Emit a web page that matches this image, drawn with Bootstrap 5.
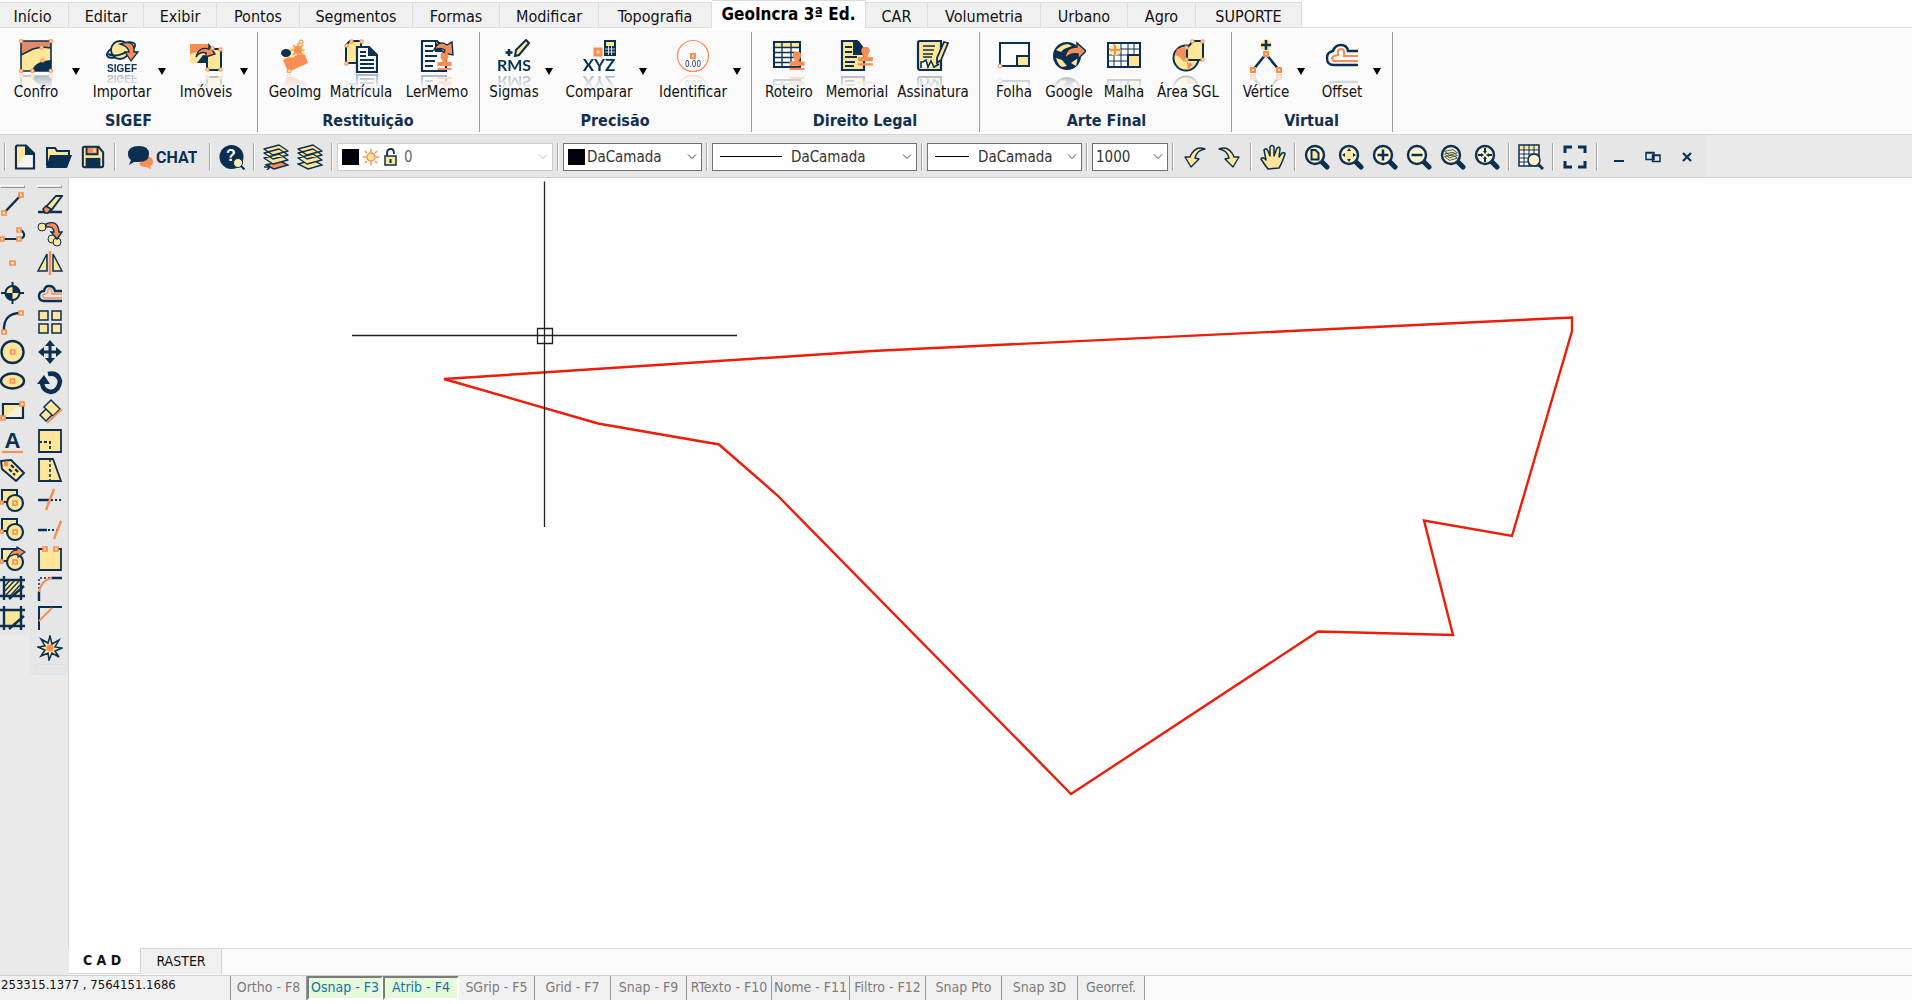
<!DOCTYPE html>
<html lang="pt-BR">
<head>
<meta charset="utf-8">
<meta name="viewport" content="width=device-width, initial-scale=1">
<title>GeoIncra 3ª Ed. - CAD</title>
<link href="https://cdn.jsdelivr.net/npm/bootstrap@5.3.0/dist/css/bootstrap.min.css" rel="stylesheet">
<style>
:root{--navy:#0a2f50;--yel:#ffe699;--ora:#fa8c55;--bar:#e6e6e6}
body{font-family:"DejaVu Sans Condensed","DejaVu Sans",sans-serif;font-size:14px;line-height:18px;color:#111;background:#fefefe;overflow:hidden}
button{font:inherit;color:inherit;background:none;border:0;padding:0}
svg{display:block;flex:none}
.n{fill:none;stroke:var(--navy)}.o{fill:none;stroke:var(--ora)}
.fn{fill:var(--navy)}.fy{fill:var(--yel)}.fo{fill:var(--ora)}
.ny{fill:var(--yel);stroke:var(--navy)}.oy{fill:var(--yel);stroke:var(--ora)}.no{fill:var(--ora);stroke:var(--navy)}
/* menu tabs */
.menu-strip{display:grid;grid-template-columns:69px 75px 73px 83px 113px 87px 99px 113px 154px 62px 113px 87px 68px 106px;height:28px;border-bottom:1px solid #e0e0e0;font-size:16px}
.menu-strip a{color:#111;text-decoration:none;text-align:center;margin-top:2px;padding-top:4px;line-height:20px;background:#f0f0f0;border-top:1px solid #dcdcdc;border-right:1px solid #dcdcdc;white-space:nowrap}
.menu-strip a:first-child{padding-right:3px}
.menu-strip a.on{font-size:17px;font-weight:bold;background:#fefefe;margin:0 0 -1px;padding-top:3px;color:#000}
/* ribbon */
.ribbon{background:#fafafa;margin-top:3px;height:101px}
.rgroup{border-right:1px solid #9c9c9c;height:100px;padding:7px 0 0 5px;margin-top:1px}
.rgroup h2{font-size:16px;line-height:20px;font-weight:bold;color:#12304f;text-align:center;margin:10px 0 0 -6px}
.rgroup .tools{gap:6px;height:62px}
.rgroup .tight{gap:0}
.g1{width:258px;padding-left:2px}.g2{width:222px}.g3{width:272px}.g4{width:228px}.g5{width:252px}.g6{width:161px}
.g1 h2{margin-left:-2px}
.rb{width:64px;height:62px;font-size:15px}
.rb svg{margin:0 auto;-webkit-box-reflect:below 1px linear-gradient(transparent 55%,rgba(0,0,0,.35))}
.rb span{display:flex;justify-content:center;margin-top:11px;line-height:17px;position:relative;white-space:nowrap}
.w52{width:52px}.w58{width:58px}.w68{width:68px}.w72{width:72px}.w76{width:76px}.w80{width:80px}.w84{width:84px}
.caret{width:12px;height:62px;font-size:0}
.caret:after{content:"";display:block;margin:3px auto 0;width:7px;border:4px solid transparent;border-top:7px solid #000;border-bottom:0}
/* quick bar */
.quick{background:linear-gradient(90deg,var(--bar) 1707px,#eaeaea 1707px);height:44px;padding-top:2px;margin-top:2px;border-top:1px solid #d4d4d4;border-bottom:1px solid #d0d0d0}
.qb{width:34px;height:34px;display:flex;align-items:center;justify-content:center}
.chat{width:85px}
.qs{width:10px;height:28px;flex:none;background:linear-gradient(90deg,transparent 4px,#a5a5a5 4px 5px,#fff 5px 6px,transparent 6px)}
.grip{width:8px}
.pick{appearance:none;height:28px;border:1px solid #707070;border-radius:0;font-size:15px;color:#333;padding:0 22px 0 6px;background:#fff url("data:image/svg+xml,%3Csvg xmlns='http://www.w3.org/2000/svg' width='10' height='6'%3E%3Cpath d='M1 .5l4 4 4-4' fill='none' stroke='%23444'/%3E%3C/svg%3E") no-repeat right 4px center}
.p-layer{width:216px;border-color:#ccc;padding-left:66px;color:#666;background-image:url("data:image/svg+xml,%3Csvg xmlns='http://www.w3.org/2000/svg' width='10' height='6'%3E%3Cpath d='M1 .5l4 4 4-4' fill='none' stroke='%23bbb'/%3E%3C/svg%3E")}
.p-color{width:139px;padding-left:23px}.p-line{width:205px;padding-left:78px}.p-wt{width:155px;padding-left:50px}.p-scale{width:76px;padding-left:3px}
.deco{position:absolute;left:5px;top:5px;pointer-events:none}
/* side bars */
.side{width:69px;background:#eaeaea;border-right:1px solid #d4d4d4}
.toolcol{background:var(--bar);padding-top:7px;align-self:flex-start}
.c1{width:30px}.c2{width:39px;padding-left:7px}
.toolcol hr{margin:0 0 3px;width:25px;height:3px;border:1px solid;border-color:#fff #999 #999 #fff;opacity:1}
.stack{display:flex;flex-direction:column;justify-content:space-between;width:25px}
.stack button{height:26px}
.h15{height:440px}.h16{height:470px}
.slot{width:31px;height:11px;margin:3px 0 0 -2px;border:1px solid #d3e3ef}
.canvas{background:#fefefe;min-width:0}
/* sheet tabs and status */
.sheets{background:#fafafa;height:27px;border-top:1px solid #d8d8d8;margin-left:69px}
.sheetwrap{background:#eaeaea;height:27px}
.sheets button{height:25px;border-right:1px solid #d4d4d4;background:#f0f0f0;line-height:23px;width:81px}
.sheets .cad{width:72px;margin-top:-3px;height:28px;background:#fff;font-weight:bold;border-bottom:1px solid #d4d4d4;padding:2px 5px 0 0;white-space:nowrap}
.status{display:grid;grid-template-columns:231px repeat(6,76px) 85px 78px repeat(3,76px) 67px 1fr;height:25px;border-top:1px solid #d0d0d0;border-bottom:2px solid #9a9a9a;font-size:14px;line-height:18px;margin-bottom:4px}
.status>*{border-right:1px solid #999;background:#f0f0f0;white-space:nowrap}
.status .coords{font-size:13px;padding-left:1px}
.status button{color:#7c7c7c;padding-bottom:3px;display:flex;justify-content:center;align-items:center}
.status button.act{color:#1672b0;background:#e6f9d8;border:2px solid #fff;border-top-color:#7c7c7c;border-left-color:#7c7c7c;padding:0 0 2px}
.status .rest{background:#fafafa;border:0}
</style>
<script src="https://cdn.jsdelivr.net/npm/bootstrap@5.3.0/dist/js/bootstrap.bundle.min.js"></script>
</head>
<body class="d-flex flex-column vh-100">
<svg width="0" height="0" class="position-absolute" aria-hidden="true">
<symbol id="lens" viewBox="0 0 26 26"><path class="n" stroke-width="5" stroke-linecap="round" d="M18 18l5 5"/><circle cx="11" cy="11" r="9" class="n" style="fill:#fff4d2" stroke-width="2.4"/></symbol>
<symbol id="layers" viewBox="0 0 26 26"><path class="ny" stroke-width="1.4" stroke-linejoin="round" d="M1 16l16-3 8 6-15 4zM1 11l16-3 8 6-15 4zM1 6l16-3 8 6-15 4z"/></symbol>
<symbol id="sheet4" viewBox="0 0 26 26"><path class="ny" stroke-width="1.400" stroke-linejoin="round" d="M1 14l15-4 9 6-15 4zM1 9l15-4 9 6-15 4zM1 5l15-4 9 6-15 4z"/></symbol>
<symbol id="stamp" viewBox="0 0 18 18"><path class="fo" d="M5 3a4 4 0 0 1 8 0c0 3-2 3-2 6h5v4H2V9h5c0-3-2-3-2-6zM2 15h14v2H2z"/></symbol>
<symbol id="shapes" viewBox="0 0 26 26"><path class="ny" stroke-width="2" d="M2 3h15v12H2z"/><circle class="ny" cx="15" cy="16" r="8" stroke-width="2.2"/><path class="oy" stroke-width="1.6" d="M13 14h4v4h-4zM0 14h3v3H0z"/></symbol>
</svg>

<nav class="menu-strip flex-shrink-0" aria-label="Menu">
<a href="#">Início</a><a href="#">Editar</a><a href="#">Exibir</a><a href="#">Pontos</a><a href="#">Segmentos</a><a href="#">Formas</a><a href="#">Modificar</a><a href="#">Topografia</a><a href="#" class="on" aria-current="page">GeoIncra 3ª Ed.</a><a href="#">CAR</a><a href="#">Volumetria</a><a href="#">Urbano</a><a href="#">Agro</a><a href="#">SUPORTE</a>
</nav>

<div class="ribbon d-flex flex-shrink-0">
<section class="rgroup g1"><div class="tools d-flex">
<div class="d-flex"><button class="rb w68"><svg width="34" height="34" viewBox="0 0 34 34"><path class="fy" d="M2 2h30v30H2z"/><path d="M2 2h30v7l-8-1-10 2-12 6z" fill="#e08a68"/><path class="fn" d="M13 32c2-7 8-10 19-11v11z"/><path class="n" stroke-width="1.6" d="M2 2h30v30H2zM2 16l12-6 9-2 9 1"/><g class="oy"><path d="M.7.7h3v3h-3zM30.300.7h3v3h-3zM.7 30.300h3v3h-3zM30.300 30.300h3v3h-3zM12 30.300h3v3h-3zM22 20h3v3h-3zM21 7h3v3h-3z" stroke-width="1"/></g></svg><span>Confro</span></button><button class="caret" aria-label="Opções de Confro"></button></div>
<div class="d-flex"><button class="rb w68"><svg width="34" height="34" viewBox="0 0 34 34"><ellipse class="n" cx="16" cy="11" rx="15" ry="6" transform="rotate(-22 16 11)" stroke-width="1.8"/><circle class="ny" cx="15" cy="11" r="9" stroke-width="1.8"/><path class="n" stroke-width="2" d="M3 15q8 4 18-2"/><path class="no" stroke-width="1.3" d="M15 5q15-5 14 8h4l-7 9-6-9h4q-1-6-9-8z"/><text x="17" y="33" text-anchor="middle" font-size="10" font-weight="bold" class="fn" font-family="Liberation Sans">SIGEF</text></svg><span>Importar</span></button><button class="caret" aria-label="Opções de Importar"></button></div>
<div class="d-flex"><button class="rb"><svg width="34" height="34" viewBox="0 0 34 34"><path class="fy" d="M1 5h19v19H1z"/><path d="M1 5h19v5L1 15z" class="fo"/><path class="fn" d="M8 24l6-8 6 1v7z"/><path class="ny" stroke-width="2" d="M19 14l5-4h8v21H18V18z"/><path class="no" stroke-width="1.4" d="M7 18q3-11 13-8V6l6 9-9 3v-4q-6-2-10 4z"/><path class="oy" d="M17 29h3v3h-3zM30 29h3v3h-3zM30 9h3v3h-3zM22 8h3v3h-3z"/></svg><span>Imóveis</span></button><button class="caret" aria-label="Opções de Imóveis"></button></div>
</div><h2>SIGEF</h2></section>

<section class="rgroup g2"><div class="tools tight d-flex">
<button class="rb"><svg width="34" height="34" viewBox="0 0 34 34"><path class="fy" d="M3 13l20-9 7 20-20 8z"/><ellipse cx="8" cy="14" rx="5" ry="4" class="fn"/><path class="fo" d="M5 21q6-4 10-2 4-5 12-3l3 8-20 9z"/><circle cx="20" cy="11" r="4" class="fo"/><path class="o" stroke-width="1.2" d="M20 4v14M13 11h14M15 6l10 10M25 6L15 16"/><circle class="oy" cx="23" cy="3" r="2"/><circle class="oy" cx="11" cy="32" r="2"/></svg><span>GeoImg</span></button>
<button class="rb w68"><svg width="34" height="34" viewBox="0 0 34 34"><path class="ny" stroke-width="2" d="M2 6l4-4h11v22H2z"/><path class="oy" d="M1 23h3v3H1zM1 5h3v3H1zM6 1h3v3H6zM16 1h3v3h-3z"/><path class="n" style="fill:#fff" stroke-width="2.200" d="M13 8h12l8 8v17H13z"/><path class="fn" d="M24 8v9h9z"/><path class="n" stroke-width="1.800" d="M16 13h6M16 17h6M16 21h14M16 25h14M16 29h14"/></svg><span>Matrícula</span></button>
<button class="rb w84"><svg width="34" height="34" viewBox="0 0 34 34"><path class="n" style="fill:#fff" stroke-width="2.200" d="M2 2h15l9 9v21H2z"/><path class="fn" d="M15 2v11h9z"/><path class="n" stroke-width="2" d="M5 7h8M5 12h8M5 17h12M5 22h10M5 27h8"/><path class="no" stroke-width="1.4" d="M14 11q5-11 13-5l5-3 1 13-10-2 2-3q-5-3-11 0z"/><use href="#stamp" x="15" y="14" width="19" height="18"/></svg><span>LerMemo</span></button>
</div><h2>Restituição</h2></section>

<section class="rgroup g3"><div class="tools d-flex">
<div class="d-flex"><button class="rb w58"><svg width="34" height="34" viewBox="0 0 34 34"><path class="ny" stroke-width="2" d="M19 11L29 1l3 3-10 12-4 1z"/><path class="n" stroke-width="2.500" d="M12 10v7M8.500 13.500h7"/><text x="17" y="32" text-anchor="middle" font-size="16" font-weight="bold" class="fn" font-family="Lato">RMS</text></svg><span>Sigmas</span></button><button class="caret" aria-label="Opções de Sigmas"></button></div>
<div class="d-flex"><button class="rb w76"><svg width="34" height="34" viewBox="0 0 34 34"><path class="oy" stroke-width="3" d="M13 10h6v6h-6z"/><path class="ny" stroke-width="2" d="M23 2h10v14H23z"/><path class="fn" d="M23 7h10v9H23z"/><path stroke="#fff" stroke-width=".8" d="M26.500 7v9M29.500 7v9M23 10h10M23 13h10"/><text x="17" y="32" text-anchor="middle" font-size="17" font-weight="bold" class="fn" font-family="Lato">XYZ</text></svg><span>Comparar</span></button><button class="caret" aria-label="Opções de Comparar"></button></div>
<div class="d-flex"><button class="rb w76"><svg width="34" height="34" viewBox="0 0 34 34"><circle class="o" cx="17" cy="17" r="15.500" stroke-width="1.200"/><path class="oy" stroke-width="2" d="M15 15h4v4h-4z"/><text x="17" y="28" text-anchor="middle" font-size="8" class="fn" font-family="DejaVu Sans Condensed">0.00</text></svg><span>Identificar</span></button><button class="caret" aria-label="Opções de Identificar"></button></div>
</div><h2>Precisão</h2></section>

<section class="rgroup g4"><div class="tools tight d-flex">
<button class="rb"><svg width="34" height="34" viewBox="0 0 34 34"><path class="n" style="fill:#fff" stroke-width="2" d="M2 3h26v25H2z"/><path class="fy" d="M3 4h24v4H3z"/><path class="n" stroke-width="1.300" d="M2 8.500h26M2 13.500h26M2 18.500h26M2 23.500h26M10 3v25M19 3v25"/><use href="#stamp" x="15" y="13" width="20" height="19"/></svg><span>Roteiro</span></button>
<button class="rb w72"><svg width="34" height="34" viewBox="0 0 34 34"><path class="ny" stroke-width="2.200" d="M2 2h15l7 9v20H2z"/><path class="fn" d="M13 2h6l6 9v5H13z"/><path class="n" stroke-width="2" d="M5 8h7M5 13h7M5 18h12M5 23h10M5 27h9"/><use href="#stamp" x="16" y="8" width="19" height="20"/></svg><span>Memorial</span></button>
<button class="rb w80"><svg width="34" height="34" viewBox="0 0 34 34"><path class="ny" stroke-width="2.200" d="M4 2h21v29H4q-2 0-2-3V4q0-2 2-2z"/><path class="n" stroke-width="1.500" d="M7 7h12M7 11h11M7 15h10M7 18h9"/><path class="n" stroke-width="1.600" style="fill:#fff" d="M5 29v-6h2l3-2 2 7 3-6 3 6 5-3"/><path class="ny" stroke-width="1.800" d="M28 3l4 1-7 17-4 3v-5z"/></svg><span>Assinatura</span></button>
</div><h2>Direito Legal</h2></section>

<section class="rgroup g5 ps-2"><div class="tools tight d-flex">
<button class="rb w52"><svg width="34" height="34" viewBox="0 0 34 34"><path class="n" style="fill:#fff" stroke-width="2" d="M3 4h29v23H3z"/><path class="ny" stroke-width="2" d="M20 17h12v10H20z"/><circle class="o" style="fill:#fff" cx="3" cy="27" r="2"/></svg><span>Folha</span></button>
<button class="rb w58"><svg width="34" height="34" viewBox="0 0 34 34"><circle class="fn" cx="15" cy="17" r="14"/><path class="fy" d="M4 11q6-6 12-6l4 2-8 3-3 3zM4 19l6 2 5 6-5 1q-4-2-6-9zM19 24l7-5-2 8z"/><path class="no" stroke-width="1.500" d="M13 20q0-12 12-12V4l9 8-8 8v-5q-8-1-13 5z"/></svg><span>Google</span></button>
<button class="rb w52"><svg width="34" height="34" viewBox="0 0 34 34"><path class="n" style="fill:#fff" stroke-width="2" d="M1 4h32v24H1z"/><path class="n" stroke-width="1" d="M1 10h32M1 16h32M1 22h32M7 4v24M14 4v24M21 4v24M27 4v24"/><circle cx="8" cy="11" r="5.500" class="fy"/><path class="o" stroke-width="2" d="M8 6v10M3 11h10"/><path class="ny" stroke-width="2" d="M21 16h12v12H21z"/></svg><span>Malha</span></button>
<button class="rb w76"><svg width="34" height="34" viewBox="0 0 34 34"><circle class="ny" cx="15" cy="19" r="12.500" stroke-width="2"/><path class="fo" d="M6 10l8-2 2 8-3 7-4-5-5-2zM16 23l6 2-5 6z"/><path class="ny" stroke-width="2" d="M16 9l6-7h10v19H16z"/><path class="oy" d="M14 7h3v3h-3zM20 1h3v3h-3zM30 1h3v3h-3zM30 19h3v3h-3zM14 19h3v3h-3z"/></svg><span>Área SGL</span></button>
</div><h2>Arte Final</h2></section>

<section class="rgroup g6"><div class="tools d-flex">
<div class="d-flex"><button class="rb w58"><svg width="34" height="34" viewBox="0 0 34 34"><circle cx="17" cy="6" r="6" class="fy"/><path class="n" stroke-width="2.500" d="M17 1v10M12 6h10"/><path class="n" stroke-width="2.500" d="M4 31l13-16 13 16"/><path class="oy" stroke-width="2" d="M15 13h4v4h-4zM2 29h4v4H2zM28 29h4v4h-4z"/></svg><span>Vértice</span></button><button class="caret" aria-label="Opções de Vértice"></button></div>
<div class="d-flex"><button class="rb w58"><svg width="34" height="34" viewBox="0 0 34 34"><path class="n" stroke-width="2.400" d="M33 26H9q-7 0-7-7 0-6 6-7 2-6 8-6 6 0 7 6h10"/><path class="o" stroke-width="2.200" d="M33 22H9q-4-3 0-5l4-1q-1-6 3-6 4 0 3 7h14"/></svg><span>Offset</span></button><button class="caret" aria-label="Opções de Offset"></button></div>
</div><h2>Virtual</h2></section>
</div>

<div class="quick d-flex align-items-center flex-shrink-0">
<i class="qs grip"></i>
<button class="qb" aria-label="Novo"><svg width="26" height="26" viewBox="0 0 26 26"><path class="n" style="fill:#f4f4f4" stroke-width="2.200" d="M5 1.500h9l8 8v15H4v-22z"/><path class="fy" d="M5 3h8v7l-8 13z"/><path class="fn" d="M13 1l10 10H13z"/></svg></button>
<button class="qb" aria-label="Abrir"><svg width="26" height="26" viewBox="0 0 26 26"><path class="ny" stroke-width="2" d="M1 22V4h8l2 3h12v10"/><path class="fn" d="M4 11h22l-5 13H0z"/></svg></button>
<button class="qb" aria-label="Salvar"><svg width="24" height="24" viewBox="0 0 26 26"><path class="ny" stroke-width="2.200" d="M2 4q0-2 2-2h15l5 6v14q0 2-2 2H4q-2 0-2-2z"/><path class="no" stroke-width="2" d="M6 2h12v8H6z"/><path d="M13 4h3v4h-3z" class="fy"/><path class="fn" d="M5 14h16v10H5z"/></svg></button>
<i class="qs"></i>
<button class="qb chat" aria-label="CHAT"><svg width="69" height="26" viewBox="0 0 69 26"><path class="fo" d="M17 13q8-1 8 5 0 3-3 4l1 3-5-2q-6 0-7-4 6-1 6-6z"/><path class="fn" d="M11 2q10 0 10 8t-10 8l-5 0-5 3 2-5q-3-2-3-6 0-8 11-8z"/><text x="28" y="19" font-size="16" font-weight="bold" class="fn" font-family="Roboto">CHAT</text></svg></button>
<i class="qs"></i>
<button class="qb" aria-label="Ajuda"><svg width="26" height="26" viewBox="0 0 26 26"><circle class="fn" cx="12.500" cy="13" r="12"/><text x="12" y="17" text-anchor="middle" font-size="16" font-weight="bold" fill="#fff" font-family="Liberation Sans">?</text><circle cx="19" cy="19" r="4.500" fill="#fff0b8" stroke="#0a2f50"/><path class="n" stroke-width="2" d="M22 22l3.500 3.500"/></svg></button>
<i class="qs"></i>
<button class="qb" aria-label="Camada atual"><svg width="26" height="26" viewBox="0 0 26 26"><path class="no" stroke-width="1.400" d="M3 21l14-4 8 4-14 4z"/><use href="#sheet4" width="26" height="26"/><path class="n" stroke-width="1.500" d="M1 23h6M4 20l3 3-3 3"/></svg></button>
<button class="qb" aria-label="Camadas"><svg width="26" height="26" viewBox="0 0 26 26"><path class="ny" stroke-width="1.400" d="M1 20l15-4 9 5-14 4z"/><use href="#sheet4" width="26" height="26"/></svg></button>
<i class="qs"></i>
<div class="position-relative"><select class="pick p-layer d-block" aria-label="Camada"><option>0</option></select>
<svg class="deco" width="60" height="18" viewBox="0 0 60 18"><path fill="#02020c" d="M0 1h17v16H0z"/><circle cx="29" cy="9" r="4" class="oy" stroke-width="1.500"/><path class="o" stroke-width="1.500" d="M29 1v3M29 14v3M21 9h3M34 9h3M23 3l2 2M33 13l2 2M35 3l-2 2M25 13l-2 2"/><path class="n" stroke-width="1.800" d="M45 8V5q0-4 4-4 3 0 3 5"/><path class="ny" stroke-width="1.500" d="M43 8h11v9H43z"/><path class="n" stroke-width="2" d="M48.500 11v4"/></svg></div>
<i class="qs"></i>
<div class="position-relative"><select class="pick p-color d-block" aria-label="Cor"><option>DaCamada</option></select><svg class="deco" width="17" height="18"><path fill="#02020c" d="M0 1h17v16H0z"/></svg></div>
<i class="qs"></i>
<div class="position-relative"><select class="pick p-line d-block" aria-label="Tipo de linha"><option>DaCamada</option></select><svg class="deco" width="68" height="18"><path stroke="#000" d="M3 8.500h62"/></svg></div>
<i class="qs"></i>
<div class="position-relative"><select class="pick p-wt d-block" aria-label="Espessura"><option>DaCamada</option></select><svg class="deco" width="40" height="18"><path stroke="#000" d="M3 8.500h34"/></svg></div>
<i class="qs"></i>
<select class="pick p-scale" aria-label="Escala"><option>1000</option></select>
<i class="qs"></i>
<button class="qb" aria-label="Desfazer"><svg width="22" height="22" viewBox="0 0 22 22"><path class="ny" stroke-width="1.400" stroke-linejoin="round" d="M21 3Q11-1 6 11H1l6 10 8-8-4-1q2-8 10-9z"/></svg></button>
<button class="qb" aria-label="Refazer"><svg width="22" height="22" viewBox="0 0 22 22"><path class="ny" stroke-width="1.400" stroke-linejoin="round" d="M1 3q10-4 15 8h5l-6 10-8-8 4-1Q9 4 1 3z"/></svg></button>
<i class="qs"></i>
<button class="qb" aria-label="Mover vista"><svg width="26" height="26" viewBox="0 0 26 26"><path class="ny" stroke-width="1.500" stroke-linejoin="round" d="M8 25q-4-5-7-10 1-3 5 1L4 6q2-3 4 1l2 5V3q2-3 4 0v9l3-8q3-2 3 1l-1 8 3-4q3-1 3 1-3 9-6 14z"/></svg></button>
<i class="qs"></i>
<button class="qb" aria-label="Zoom página"><svg width="26" height="26" viewBox="0 0 26 26"><use href="#lens"/><path class="ny" stroke-width="2" d="M7.500 6h4l3 3v6.500h-7z"/></svg></button>
<button class="qb" aria-label="Zoom extensão"><svg width="26" height="26" viewBox="0 0 26 26"><use href="#lens"/><circle cx="11" cy="11" r="4" class="fy"/><path class="fn" d="M11 4l2 3H9zM11 18l2-3H9zM4 11l3-2v4zM18 11l-3-2v4z"/></svg></button>
<button class="qb" aria-label="Mais zoom"><svg width="26" height="26" viewBox="0 0 26 26"><use href="#lens"/><path class="n" stroke-width="2.500" d="M11 5.500v11M5.500 11h11"/></svg></button>
<button class="qb" aria-label="Menos zoom"><svg width="26" height="26" viewBox="0 0 26 26"><use href="#lens"/><path class="n" stroke-width="2.500" d="M5.500 11h11"/></svg></button>
<button class="qb" aria-label="Zoom camada"><svg width="26" height="26" viewBox="0 0 26 26"><use href="#lens"/><use href="#layers" x="4" y="4" width="14" height="14"/></svg></button>
<button class="qb" aria-label="Zoom centro"><svg width="26" height="26" viewBox="0 0 26 26"><use href="#lens"/><path class="fn" d="M11 10l2-3h-1V4h-2v3H9zM11 12l2 3h-1v3h-2v-3H9zM10 11L7 9v1H4v2h3v1zM12 11l3-2v1h3v2h-3v1z"/></svg></button>
<i class="qs"></i>
<button class="qb" aria-label="Tabela"><svg width="26" height="26" viewBox="0 0 26 26"><path class="n" style="fill:#fff" stroke-width="1.500" d="M1 1h20v21H1z"/><path class="fy" d="M2 2h18v4H2z"/><path class="n" stroke-width="1" d="M1 6h20M1 10h20M1 14h20M1 18h20M6 1v21M11 1v21M16 1v21"/><circle class="n" style="fill:#fff4d2" cx="16" cy="16" r="6" stroke-width="1.500"/><path class="n" stroke-width="3" d="M21 21l4 4"/></svg></button>
<i class="qs"></i>
<button class="qb" aria-label="Tela cheia"><svg width="24" height="24" viewBox="0 0 24 24"><path class="n" stroke-width="3" d="M2 8V2h7M15 2h7v6M22 16v6h-7M9 22H2v-6"/></svg></button>
<i class="qs"></i>
<button class="qb" aria-label="Minimizar"><svg width="12" height="12"><path class="n" stroke-width="2" d="M1 10h10"/></svg></button>
<button class="qb" aria-label="Restaurar"><svg width="16" height="12"><path class="n" stroke-width="1.500" d="M1 1.500h8v7H1zM7.500 4h7.500v6.500H7.500zM1 2h8M7 4.500h8"/></svg></button>
<button class="qb" aria-label="Fechar"><svg width="12" height="12"><path class="n" stroke-width="2.200" d="M2 2l8 8M10 2l-8 8"/></svg></button>
</div>

<main class="d-flex flex-grow-1">
<aside class="side d-flex flex-shrink-0">
<div class="toolcol c1 pb-1"><hr><div class="stack h15">
<button aria-label="Linha"><svg width="26" height="26" viewBox="0 0 26 26"><path class="n" stroke-width="2.500" d="M4 22L21 4"/><path class="oy" stroke-width="1.700" d="M2 20h4v4H2zM19 2h4v4h-4z"/></svg></button>
<button aria-label="Polilinha"><svg width="26" height="26" viewBox="0 0 26 26"><path class="n" stroke-width="2.200" d="M2 18h17q6-1 5-5-1-4-5-4"/><path class="oy" stroke-width="1.700" d="M0 16h4v4H0zM17 16h4v4h-4zM17 7h4v4h-4z"/></svg></button>
<button aria-label="Ponto"><svg width="26" height="26" viewBox="0 0 26 26"><path class="oy" stroke-width="1.700" d="M10 11h5v4h-5z"/></svg></button>
<button aria-label="Coordenada"><svg width="26" height="26" viewBox="0 0 26 26"><path class="n" stroke-width="2" d="M12.500 2v22M1 13h23"/><circle class="ny" cx="12.500" cy="13" r="7" stroke-width="2"/><path class="fn" d="M12.500 13V6a7 7 0 0 1 7 7zM12.500 13v7a7 7 0 0 1-7-7z"/></svg></button>
<button aria-label="Arco"><svg width="26" height="26" viewBox="0 0 26 26"><path class="n" stroke-width="2.400" d="M4 22Q3 4 21 4"/><path class="oy" stroke-width="1.700" d="M2 21h4v4H2zM19 2h4v4h-4z"/></svg></button>
<button aria-label="Círculo"><svg width="26" height="26" viewBox="0 0 26 26"><circle class="ny" cx="12.500" cy="13" r="11" stroke-width="2.400"/><path class="oy" stroke-width="1.700" d="M10.500 11h4v4h-4z"/></svg></button>
<button aria-label="Elipse"><svg width="26" height="26" viewBox="0 0 26 26"><ellipse class="ny" cx="12.500" cy="13" rx="11.500" ry="7.500" stroke-width="2.400"/><path class="oy" stroke-width="1.700" d="M10.500 11h4v4h-4z"/></svg></button>
<button aria-label="Retângulo"><svg width="26" height="26" viewBox="0 0 26 26"><path class="n" style="fill:#f6f0dc" stroke-width="2.200" d="M3 6h20v14H3z"/><path class="fy" d="M4 19V7h16z"/><path class="oy" stroke-width="1.700" d="M1 18h4v4H1zM20 4h4v4h-4z"/></svg></button>
<button aria-label="Texto"><svg width="26" height="26" viewBox="0 0 26 26"><text x="12.500" y="20" text-anchor="middle" font-size="22" font-weight="bold" class="fn" font-family="Liberation Sans">A</text><path class="o" stroke-width="2.200" d="M2 24h21"/></svg></button>
<button aria-label="Etiqueta"><svg width="26" height="26" viewBox="0 0 26 26"><path class="ny" stroke-width="2" stroke-linejoin="round" d="M1 4l10-1 13 13-8 8L2 12z"/><circle class="fo" cx="6" cy="7" r="2.500"/><path class="n" stroke-width="2.200" stroke-dasharray="4 2" d="M11 8l7 7M9 12l6 6"/></svg></button>
<button aria-label="Criar bloco"><svg width="26" height="26"><use href="#shapes"/></svg></button>
<button aria-label="Inserir bloco"><svg width="26" height="26"><use href="#shapes"/></svg></button>
<button aria-label="Exportar bloco"><svg width="26" height="26" viewBox="0 0 26 26"><use href="#shapes"/><path class="no" stroke-width="1.200" d="M9 11q2-7 8-7V1l8 5-7 5V8q-5 0-9 3z"/></svg></button>
<button aria-label="Hachura"><svg width="26" height="26" viewBox="0 0 26 26"><path class="ny" stroke-width="2" d="M4 5h17v16H4z"/><path class="n" stroke-width="1.300" d="M5 11l5-6M5 16L15 5M6 20L19 6M11 20l9-10"/><path class="n" stroke-width="2.400" d="M0 5h25M0 21h25M4 1v24M21 1v24M9 24L24 11"/></svg></button>
<button aria-label="Contorno"><svg width="26" height="26" viewBox="0 0 26 26"><path class="ny" stroke-width="2" d="M4 5h17v16H4z"/><path class="n" stroke-width="2.400" d="M0 5h25M0 21h25M4 1v24M21 1v24M9 24L24 11"/></svg></button>
</div></div>
<div class="toolcol c2"><hr><div class="stack h16">
<button aria-label="Apagar"><svg width="26" height="26" viewBox="0 0 26 26"><path class="n" stroke-width="2.500" d="M1 21h24"/><path class="ny" stroke-width="1.800" d="M7 18L19 5h6L13 21H9z"/><path class="no" stroke-width="1.500" d="M6 18l3-3 5 3-3 4H8z"/></svg></button>
<button aria-label="Copiar"><svg width="26" height="26" viewBox="0 0 26 26"><circle class="ny" cx="5" cy="6" r="4"/><circle class="ny" cx="15" cy="18" r="4"/><circle class="ny" cx="20" cy="21" r="4"/><path class="no" stroke-width="1.400" d="M9 3q12-5 13 8h3l-5 7-6-7h3q0-6-8-5z"/></svg></button>
<button aria-label="Espelhar"><svg width="26" height="26" viewBox="0 0 26 26"><path class="ny" stroke-width="1.500" d="M1 21L10 4v17zM25 21L16 4v17z"/><path class="o" stroke-width="2.400" d="M13 1v24"/></svg></button>
<button aria-label="Offset"><svg width="26" height="26" viewBox="0 0 26 26"><path class="n" stroke-width="2.400" d="M25 21H7q-5 0-5-5t5-5q1-5 5-5 5 0 6 5h7"/><path class="o" stroke-width="1.300" d="M25 18H7q-3-3 1-4l3-1q-1-5 2-4 2 0 2 5h10"/></svg></button>
<button aria-label="Matriz"><svg width="26" height="26" viewBox="0 0 26 26"><path class="ny" stroke-width="1.500" d="M2 2h9v9H2zM15 2h9v9h-9zM2 15h9v9H2zM15 15h9v9h-9z"/></svg></button>
<button aria-label="Mover"><svg width="26" height="26" viewBox="0 0 26 26"><path class="n" stroke-width="3" d="M13 4v18M4 13h18"/><path class="fn" d="M13 1l5 6H8zM13 25l5-6H8zM1 13l6-5v10zM25 13l-6-5v10z"/></svg></button>
<button aria-label="Girar"><svg width="26" height="26" viewBox="0 0 26 26"><path class="n" stroke-width="4.500" d="M11 5q10-2 12 7-1 10-9 11-8-1-9-9"/><path class="fn" d="M0 15L7 6l6 9z"/></svg></button>
<button aria-label="Alinhar"><svg width="26" height="26" viewBox="0 0 26 26"><path class="ny" stroke-width="1.500" d="M3 17l6-6 6 6-6 6zM7 9l7-7 9 9-7 7z"/><path class="o" stroke-width="2" d="M10 25l15-14"/></svg></button>
<button aria-label="Escala"><svg width="26" height="26" viewBox="0 0 26 26"><path class="ny" stroke-width="1.800" d="M2 2h22v22H2z"/><path class="n" stroke-width="1.800" stroke-dasharray="3 2" d="M2 14h11v10"/></svg></button>
<button aria-label="Esticar"><svg width="26" height="26" viewBox="0 0 26 26"><path class="ny" stroke-width="1.800" d="M2 2h14l8 22H2z"/><path class="n" stroke-width="1.500" stroke-dasharray="3 2" d="M13 2v22"/></svg></button>
<button aria-label="Cortar"><svg width="26" height="26" viewBox="0 0 26 26"><path class="n" stroke-width="2.500" d="M1 13h11"/><path class="n" stroke-width="2" stroke-dasharray="2 2" d="M14 13h11"/><path class="o" stroke-width="2.400" d="M9 23l8-21"/></svg></button>
<button aria-label="Estender"><svg width="26" height="26" viewBox="0 0 26 26"><path class="n" stroke-width="2.500" d="M1 13h9"/><path class="n" stroke-width="2" stroke-dasharray="2 2" d="M11 13h10"/><path class="o" stroke-width="2.400" d="M17 22l7-18"/></svg></button>
<button aria-label="Quebrar"><svg width="26" height="26" viewBox="0 0 26 26"><path class="ny" stroke-width="1.800" d="M8 3H2v21h22V3h-6"/><path class="oy" stroke-width="1.700" d="M6 1h4v4H6zM17 1h4v4h-4z"/></svg></button>
<button aria-label="Arredondar"><svg width="26" height="26" viewBox="0 0 26 26"><path class="n" stroke-width="2.400" d="M2 25V15M14 2h11"/><path class="n" stroke-width="1.500" stroke-dasharray="2 2" d="M2 13V2h12"/><path class="o" stroke-width="2" d="M2 16Q4 4 15 2"/></svg></button>
<button aria-label="Chanfrar"><svg width="26" height="26" viewBox="0 0 26 26"><path class="n" stroke-width="2" d="M2 25V2h23"/><path class="o" stroke-width="2" d="M2 16L15 3"/></svg></button>
<button aria-label="Explodir"><svg width="26" height="26" viewBox="0 0 26 26"><path class="ny" stroke-width="1.500" d="M13 1l2 8 7-4-4 7 7 1-7 3 4 6-7-4-3 7-1-7-7 3 4-6-7-3 7-1-4-7 7 4z"/><circle class="fo" cx="13" cy="13" r="3.500"/></svg></button>
</div><div class="slot"></div></div>
</aside>
<div class="canvas flex-grow-1 position-relative overflow-hidden">
<svg class="position-absolute top-0 start-0" width="100%" height="100%" role="img" aria-label="Desenho do perímetro">
<g transform="translate(-69 -178)">
<path fill="none" stroke="#ee1c08" stroke-width="2.400" stroke-linejoin="miter" d="M444 379L598 423.500 719 444.500 777 495 1071 794 1318 631.500 1453 635 1424 520.500 1512 536 1572 331V317.500L872 351z"/>
<path fill="none" stroke="#222" stroke-width="1.300" d="M544.500 181.500V527M352 335.500H737M537.500 328.500h15v15h-15z"/>
</g></svg>
</div>
</main>

<div class="sheetwrap flex-shrink-0"><div class="sheets d-flex"><button class="cad">C A D</button><button>RASTER</button></div></div>
<footer class="status flex-shrink-0"><div class="coords">253315.1377 , 7564151.1686</div><button>Ortho - F8</button><button class="act">Osnap - F3</button><button class="act">Atrib - F4</button><button>SGrip - F5</button><button>Grid - F7</button><button>Snap - F9</button><button>RTexto - F10</button><button>Nome - F11</button><button>Filtro - F12</button><button>Snap Pto</button><button>Snap 3D</button><button>Georref.</button><div class="rest"></div></footer>
</body>
</html>
